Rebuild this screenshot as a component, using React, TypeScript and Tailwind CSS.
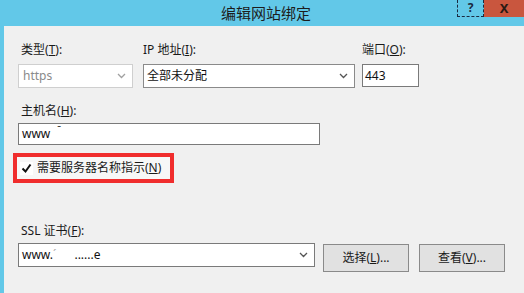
import React from 'react';

const FONT = { fontFamily: '"Noto Sans", "Noto Sans CJK SC", sans-serif' };

const Chevron = ({ color = '#7a7a7a' }: { color?: string }) => (
  <svg width="9" height="6" viewBox="0 0 9 6" fill="none">
    <path d="M1 1l3.5 3.5L8 1" stroke={color} strokeWidth="1.3" />
  </svg>
);

const Label = ({ text, k, tail = '):' }: { text: string; k: string; tail?: string }) => (
  <div className="h-[16px] leading-[16px] text-[12px] text-[#1a1a1a] pl-[3px] whitespace-nowrap">
    {text}(<span className="underline">{k}</span>{tail}
  </div>
);

const App: React.FC = () => {
  return (
    <div className="w-[524px] h-[293px] bg-[#62c8e8] flex flex-col overflow-hidden" style={FONT}>
      {/* Title bar */}
      <div className="relative h-[26px] flex items-center justify-center">
        <span className="text-[15px] text-[#1c1c1c] ml-[8px]">编辑网站绑定</span>
        <div className="absolute top-0 right-0 flex h-[17px]">
          <div className="w-[27px] border border-dashed border-[#1a2a40] border-t-0 flex items-center justify-center text-[12px] font-bold text-[#1a2a40]">
            ?
          </div>
          <div className="w-[40px] bg-[#c9563e] flex items-center justify-center text-[13px] font-bold text-[#2a1a14]">
            X
          </div>
        </div>
      </div>

      {/* Body */}
      <div className="flex-1 ml-[4px] bg-[#f0f0f0] pl-[14px] pt-[16px] flex flex-col">
        {/* Row 1 */}
        <div className="flex">
          <div className="flex flex-col gap-[6px] w-[115px]">
            <Label text="类型" k="T" />
            <div className="h-[24px] border border-[#cfcfcf] bg-white flex items-center justify-between pl-[4px] pr-[6px] text-[12px] text-[#8a8a8a]">
              https
              <Chevron color="#a0a0a0" />
            </div>
          </div>
          <div className="flex flex-col gap-[6px] w-[212px] ml-[10px]">
            <div className="h-[16px] leading-[16px] text-[12px] text-[#1a1a1a] whitespace-nowrap">
              IP 地址(<span className="underline">I</span>):
            </div>
            <div className="h-[24px] border border-[#8a8a8a] bg-white flex items-center justify-between pl-[3px] pr-[6px] text-[12px] text-[#111]">
              全部未分配
              <Chevron color="#555" />
            </div>
          </div>
          <div className="flex flex-col gap-[6px] w-[57px] ml-[7px]">
            <div className="h-[16px] leading-[16px] text-[12px] text-[#1a1a1a] whitespace-nowrap">
              端口(<span className="underline">O</span>):
            </div>
            <div className="h-[23px] border border-[#7a7a7a] bg-white flex items-center pl-[2px] text-[12px] text-[#111]">
              443
            </div>
          </div>
        </div>

        {/* Row 2 */}
        <div className="flex flex-col gap-[4px] mt-[15px] w-[302px]">
          <Label text="主机名" k="H" />
          <div className="h-[22px] border border-[#7a7a7a] bg-white flex items-center pl-[3px] text-[12px] text-[#111]">
            www<span className="ml-[7px] -mt-[8px] text-[10px]">ˉ</span>
          </div>
        </div>

        {/* Highlighted checkbox */}
        <div className="mt-[8px] -ml-[5px] w-[161px] h-[30px] border-[4px] border-[#f02d2d] bg-[#f7f7f7] flex items-center pl-[3px] gap-[4px]">
          <div className="w-[13px] h-[13px] bg-white flex items-center justify-center">
            <svg width="11" height="11" viewBox="0 0 11 11" fill="none">
              <path d="M1.5 5.5l3 3 5-7" stroke="#111" strokeWidth="2" />
            </svg>
          </div>
          <span className="text-[12px] text-[#1a1a1a] whitespace-nowrap">
            需要服务器名称指示(<span className="underline">N</span>)
          </span>
        </div>

        {/* Row 3 */}
        <div className="flex flex-col gap-[4px] mt-[40px]">
          <div className="h-[16px] leading-[16px] text-[12px] text-[#1a1a1a] pl-[3px] whitespace-nowrap">
            SSL 证书(<span className="underline">F</span>):
          </div>
          <div className="flex items-start">
            <div className="w-[297px] h-[24px] border border-[#7a7a7a] bg-white flex items-center justify-between pl-[3px] pr-[6px] text-[12px] text-[#111]">
              <span className="whitespace-nowrap">
                www.<span className="text-[#aaa]">´</span>
                <span className="ml-[18px]">......e</span>
              </span>
              <Chevron color="#555" />
            </div>
            <button className="ml-[8px] mt-[1px] w-[86px] h-[28px] bg-[#e1e1e1] border border-[#8a8a8a] text-[12px] text-[#1a1a1a]">
              选择(<span className="underline">L</span>)...
            </button>
            <button className="ml-[10px] mt-[1px] w-[86px] h-[28px] bg-[#e1e1e1] border border-[#8a8a8a] text-[12px] text-[#1a1a1a]">
              查看(<span className="underline">V</span>)...
            </button>
          </div>
        </div>
      </div>
    </div>
  );
};

export default App;
